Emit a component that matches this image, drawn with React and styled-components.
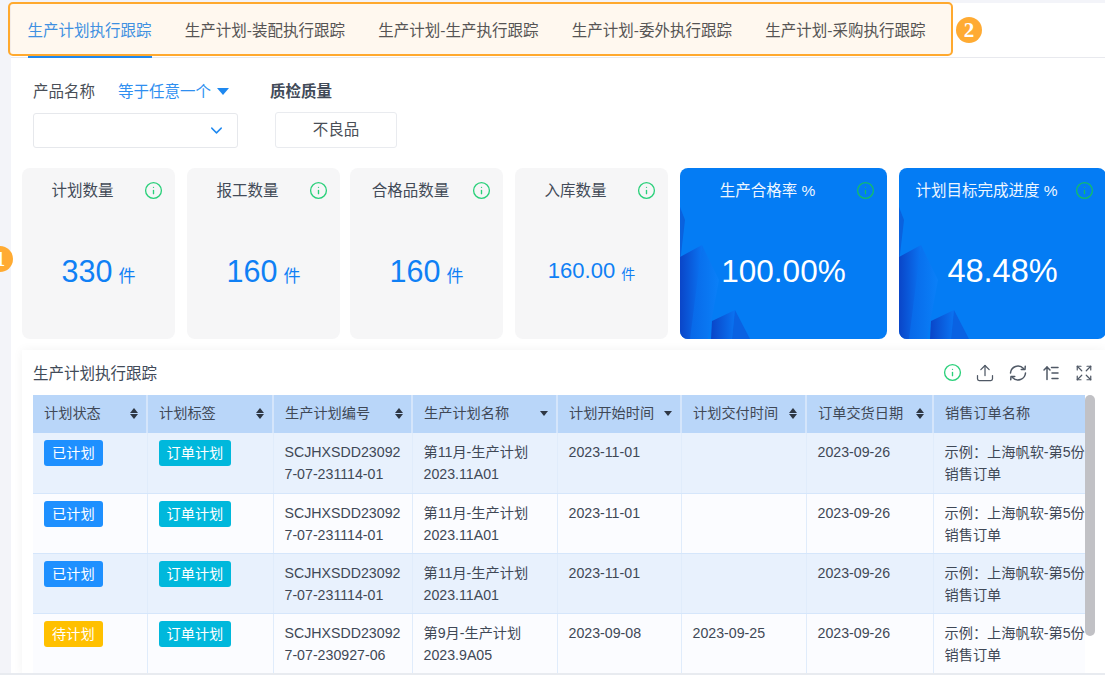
import React from "react";
import styled, { createGlobalStyle } from "styled-components";
import { ChevronDown, Expand, Info, Upload } from "lucide-react";

const GlobalStyle = createGlobalStyle`
  html, body {
    margin: 0;
    padding: 0;
    overflow: hidden;
  }
  body {
    font-family: "Liberation Sans", "Noto Sans CJK SC", sans-serif;
    color: #3f4856;
  }
`;

const Page = styled.div`
  position: relative;
  box-sizing: border-box;
  width: 1105px;
  height: 675px;
  overflow: hidden;
  padding: 3px 0 0 11px;
  background: #f3f4f9;
  border-bottom: 2px solid #e8ebf0;
`;

const Main = styled.main`
  height: 100%;
  background: #fff;
`;

const TabBar = styled.nav`
  display: flex;
  gap: 33.3px;
  height: 55px;
  box-sizing: border-box;
  padding-left: 16.5px;
  border-bottom: 1px solid #e8e9ee;
`;

const Tab = styled.div`
  height: 55px;
  box-sizing: border-box;
  padding-top: 18px;
  font-size: 15.5px;
  line-height: 20px;
  white-space: nowrap;
  color: ${(p) => (p.$active ? "#2f8ff0" : "#484e57")};
  border-bottom: 3px solid ${(p) => (p.$active ? "#1e88f0" : "transparent")};
`;

const TabFrame = styled.div`
  position: absolute;
  left: 8px;
  top: 2px;
  width: 945px;
  height: 54px;
  box-sizing: border-box;
  border: 2.5px solid #ffa92e;
  border-radius: 5px;
  background: rgba(255, 170, 50, 0.08);
  pointer-events: none;
`;

const Badge = styled.div`
  position: absolute;
  left: ${(p) => p.$left}px;
  top: ${(p) => p.$top}px;
  width: 26px;
  height: 26px;
  border-radius: 50%;
  background: #ffab33;
  color: #fff;
  font: bold 21px/26px "Liberation Serif", serif;
  text-align: center;
`;

const Filters = styled.section`
  display: flex;
  padding: 21px 0 20px 22px;
`;

const Field = styled.div`
  display: flex;
  flex-direction: column;
  width: ${(p) => p.$width}px;
  margin-right: 32px;
`;

const FieldLabel = styled.div`
  display: flex;
  align-items: center;
  height: 22px;
  font-size: 15.5px;
  white-space: nowrap;
  font-weight: ${(p) => (p.$strong ? 700 : 400)};
  color: ${(p) => (p.$strong ? "#414a58" : "#4a4f57")};
`;

const Operator = styled.span`
  margin-left: 23px;
  color: #2f8ff0;
`;

const Caret = styled.span`
  width: 0;
  height: 0;
  margin: 2px 0 0 6px;
  border-left: 6px solid transparent;
  border-right: 6px solid transparent;
  border-top: 7px solid #1e88f0;
`;

const Select = styled.div`
  display: flex;
  align-items: center;
  justify-content: flex-end;
  box-sizing: border-box;
  height: 35px;
  margin-top: 12px;
  padding-right: 11px;
  border: 1px solid #e6e8ec;
  border-radius: 3px;
  color: #1e88f0;
`;

const OptionButton = styled.div`
  box-sizing: border-box;
  width: 122px;
  height: 36px;
  margin: 11px 0 0 5px;
  border: 1px solid #e9ebef;
  border-radius: 3px;
  font-size: 15.5px;
  line-height: 34px;
  text-align: center;
  color: #4a4f57;
`;

const Stats = styled.section`
  display: flex;
  height: 171px;
  padding-left: 11px;
`;

const StatCard = styled.div`
  position: relative;
  flex: none;
  display: flex;
  flex-direction: column;
  overflow: hidden;
  width: ${(p) => (p.$blue ? 207 : 153)}px;
  margin-right: ${(p) => (p.$tight ? 10 : 12)}px;
  border-radius: 8px;
  background: ${(p) => (p.$blue ? "#047cf4" : "#f6f6f7")};
  color: ${(p) => (p.$blue ? "#fff" : "#0f80f5")};
`;

const Crystals = styled.svg`
  position: absolute;
  left: 0;
  top: 0;
  width: 100%;
  height: 100%;
`;

const StatHead = styled.div`
  position: relative;
  display: flex;
  align-items: center;
  height: 19px;
  padding: 13px 12px 0 14px;
  line-height: 19px;
`;

const StatTitle = styled.div`
  flex: 1;
  text-align: center;
  font-size: 15.5px;
  white-space: nowrap;
  color: ${(p) => (p.$blue ? "#eef6ff" : "#434b58")};
`;

const InfoMark = styled(Info)`
  flex: none;
  margin-left: 15px;
  color: ${(p) => (p.$blue ? "#12bd6a" : "#2ad07a")};
`;

const StatValue = styled.div`
  position: relative;
  flex: 1;
  display: flex;
  align-items: center;
  justify-content: center;
  gap: 6px;
  padding-top: 3px;
  font-size: ${(p) => p.$size}px;
`;

const Unit = styled.span`
  align-self: center;
  margin-top: ${(p) => (p.$small ? 3 : 6)}px;
  font-size: ${(p) => (p.$small ? 14 : 17)}px;
`;

const Panel = styled.section`
  margin: 11px 0 0 11px;
  padding: 0 10px 0 11px;
  background: #fff;
  box-shadow: 0 0 10px rgba(0, 0, 0, 0.05);
`;

const PanelHead = styled.header`
  display: flex;
  align-items: center;
  height: 45px;
`;

const PanelTitle = styled.h2`
  flex: 1;
  margin: 0 0 2px;
  font-size: 15.5px;
  font-weight: 400;
  color: #414a58;
`;

const Tools = styled.div`
  display: flex;
  align-items: center;
  gap: 13px;
  margin-right: 1px;
  color: #4f5865;
`;

const ToolSlot = styled.span`
  display: flex;
  align-items: center;
  justify-content: center;
  width: 20px;
  height: 20px;
`;

const TableRow = styled.div`
  display: flex;
`;

const TableClip = styled.div`
  flex: none;
  width: 1052px;
  overflow: hidden;
`;

const Table = styled.table`
  width: 1070px;
  table-layout: fixed;
  border-collapse: collapse;
  font-size: 14.2px;
  line-height: 22px;
  color: #3f4856;
`;

const HeadCell = styled.th`
  height: 38px;
  box-sizing: border-box;
  padding: 0 0 0 11px;
  background: #b9d6f9;
  border-right: 2px solid #d4e5fb;
  font-weight: 400;
  text-align: left;
  white-space: nowrap;
`;

const HeadInner = styled.div`
  display: flex;
  align-items: center;
  justify-content: space-between;
  padding: 0 8px 2px 0;
`;

const SortMark = styled.span`
  display: flex;
  flex-direction: column;
  gap: 1px;
  width: 8px;
`;

const Arrow = styled.i`
  width: 0;
  height: 0;
  border-left: 4px solid transparent;
  border-right: 4px solid transparent;
  ${(p) => (p.$up ? "border-bottom" : "border-top")}: 5px solid #2e3744;
`;

const BodyRow = styled.tr`
  height: 60.3px;
  background: ${(p) => (p.$odd ? "#e8f1fd" : "#fbfcff")};
`;

const Cell = styled.td`
  box-sizing: border-box;
  padding: 8px 11px 0;
  vertical-align: top;
  word-break: break-all;
  border-right: 1px solid #e0ecfb;
  border-bottom: 1px solid #d5e6fb;
`;

const Tag = styled.span`
  display: inline-block;
  margin-top: -1px;
  padding: 0 8px;
  border-radius: 3px;
  line-height: 26px;
  vertical-align: top;
  color: #fff;
  background: ${(p) => p.$color};
`;

const Scrollbar = styled.div`
  flex: none;
  width: 10px;
`;

const Thumb = styled.div`
  height: 241px;
  border-radius: 5px;
  background: #c1c1c5;
`;

const columns = [
  { title: "计划状态", width: 114, sort: "both" },
  { title: "计划标签", width: 126, sort: "both" },
  { title: "生产计划编号", width: 139, sort: "both" },
  { title: "生产计划名称", width: 145, sort: "down" },
  { title: "计划开始时间", width: 124, sort: "down" },
  { title: "计划交付时间", width: 125, sort: "both" },
  { title: "订单交货日期", width: 127, sort: "both" },
  { title: "销售订单名称", width: 170, sort: "both" },
];

const rows = [
  { status: "已计划", code: "SCJHXSDD230927-07-231114-01", name: "第11月-生产计划", batch: "2023.11A01", start: "2023-11-01", end: "" },
  { status: "已计划", code: "SCJHXSDD230927-07-231114-01", name: "第11月-生产计划", batch: "2023.11A01", start: "2023-11-01", end: "" },
  { status: "已计划", code: "SCJHXSDD230927-07-231114-01", name: "第11月-生产计划", batch: "2023.11A01", start: "2023-11-01", end: "" },
  { status: "待计划", code: "SCJHXSDD230927-07-230927-06", name: "第9月-生产计划", batch: "2023.9A05", start: "2023-09-08", end: "2023-09-25" },
];

const tabs = [
  "生产计划执行跟踪",
  "生产计划-装配执行跟踪",
  "生产计划-生产执行跟踪",
  "生产计划-委外执行跟踪",
  "生产计划-采购执行跟踪",
];

const stats = [
  { title: "计划数量", value: "330", unit: "件", size: 30.5 },
  { title: "报工数量", value: "160", unit: "件", size: 30.5 },
  { title: "合格品数量", value: "160", unit: "件", size: 30.5 },
  { title: "入库数量", value: "160.00", unit: "件", size: 22, small: true },
  { title: "生产合格率 %", value: "100.00%", size: 31.5, blue: true },
  { title: "计划目标完成进度 %", value: "48.48%", size: 32.5, blue: true },
];

function CrystalArt({ id }) {
  return (
    <Crystals viewBox="0 0 207 171" preserveAspectRatio="none">
      <defs>
        <linearGradient id={`${id}a`} x1="0" y1="0" x2="1" y2="0">
          <stop offset="0" stopColor="#0a45c8" />
          <stop offset="1" stopColor="#0a74f2" />
        </linearGradient>
        <linearGradient id={`${id}b`} x1="0" y1="0" x2="1" y2="0">
          <stop offset="0" stopColor="#0868e8" />
          <stop offset="1" stopColor="#0a80f8" />
        </linearGradient>
      </defs>
      <polygon points="0,39 5,52 0,95" fill="#0a62de" />
      <polygon points="0,89 22,77 12,171 0,171" fill={`url(#${id}a)`} />
      <polygon points="22,77 39,112 28,171 10,171" fill={`url(#${id}b)`} />
      <polygon points="32,153 55,142 52,171 31,171" fill={`url(#${id}a)`} />
      <polygon points="55,142 70,171 52,171" fill="#0a62e2" />
    </Crystals>
  );
}

function RefreshIcon() {
  return (
    <svg width="20" height="20" viewBox="0 0 16 16" fill="none" stroke="currentColor" strokeWidth="1.2" strokeLinecap="round" strokeLinejoin="round">
      <path d="M2 8a6 6 0 0 1 10.4-3.6" />
      <path d="M14 8a6 6 0 0 1-10.4 3.6" />
      <path d="M10.6 5.2h3l.2-2.6" />
      <path d="M5.4 10.8h-3l-.2 2.6" />
    </svg>
  );
}

function SortLinesIcon() {
  return (
    <svg width="20" height="20" viewBox="0 0 20 20" fill="none" stroke="currentColor" strokeWidth="1.5" strokeLinecap="round" strokeLinejoin="round">
      <path d="M6 16.5V4" />
      <path d="M3 7l3-3 3 3" />
      <path d="M10.5 4.5H17" />
      <path d="M11 10h6" />
      <path d="M11 15.5h6" />
    </svg>
  );
}

export default function App() {
  return (
    <Page>
      <GlobalStyle />
      <Main>
        <TabBar>
          {tabs.map((tab, i) => (
            <Tab key={tab} $active={i === 0}>
              {tab}
            </Tab>
          ))}
        </TabBar>

        <Filters>
          <Field $width={205}>
            <FieldLabel>
              产品名称
              <Operator>等于任意一个</Operator>
              <Caret />
            </FieldLabel>
            <Select>
              <ChevronDown size={19} strokeWidth={1.8} />
            </Select>
          </Field>
          <Field $width={127}>
            <FieldLabel $strong>质检质量</FieldLabel>
            <OptionButton>不良品</OptionButton>
          </Field>
        </Filters>

        <Stats>
          {stats.map((stat, i) => (
            <StatCard key={stat.title} $blue={stat.blue} $tight={i === 1}>
              {stat.blue && <CrystalArt id={`crystal${i}`} />}
              <StatHead>
                <StatTitle $blue={stat.blue}>{stat.title}</StatTitle>
                <InfoMark size={19} strokeWidth={1.7} $blue={stat.blue} />
              </StatHead>
              <StatValue $size={stat.size}>
                {stat.value}
                {stat.unit && <Unit $small={stat.small}>{stat.unit}</Unit>}
              </StatValue>
            </StatCard>
          ))}
        </Stats>

        <Panel>
          <PanelHead>
            <PanelTitle>生产计划执行跟踪</PanelTitle>
            <Tools>
              <ToolSlot>
                <Info size={19} strokeWidth={1.7} color="#2ad07a" />
              </ToolSlot>
              <ToolSlot>
                <Upload size={20} strokeWidth={1.5} />
              </ToolSlot>
              <ToolSlot>
                <RefreshIcon />
              </ToolSlot>
              <ToolSlot>
                <SortLinesIcon />
              </ToolSlot>
              <ToolSlot>
                <Expand size={18} strokeWidth={1.6} />
              </ToolSlot>
            </Tools>
          </PanelHead>
          <TableRow>
            <TableClip>
              <Table>
                <colgroup>
                  {columns.map((col) => (
                    <col key={col.title} width={col.width} />
                  ))}
                </colgroup>
                <thead>
                  <tr>
                    {columns.map((col) => (
                      <HeadCell key={col.title}>
                        <HeadInner>
                          {col.title}
                          <SortMark>
                            {col.sort === "both" && <Arrow $up />}
                            <Arrow />
                          </SortMark>
                        </HeadInner>
                      </HeadCell>
                    ))}
                  </tr>
                </thead>
                <tbody>
                  {rows.map((row, i) => (
                    <BodyRow key={i} $odd={i % 2 === 0}>
                      <Cell>
                        <Tag $color={row.status === "已计划" ? "#1e90ff" : "#ffc000"}>{row.status}</Tag>
                      </Cell>
                      <Cell>
                        <Tag $color="#00b8dc">订单计划</Tag>
                      </Cell>
                      <Cell>{row.code}</Cell>
                      <Cell>
                        {row.name}
                        <br />
                        {row.batch}
                      </Cell>
                      <Cell>{row.start}</Cell>
                      <Cell>{row.end}</Cell>
                      <Cell>2023-09-26</Cell>
                      <Cell>示例：上海帆软-第5份销售订单</Cell>
                    </BodyRow>
                  ))}
                </tbody>
              </Table>
            </TableClip>
            <Scrollbar>
              <Thumb />
            </Scrollbar>
          </TableRow>
        </Panel>
      </Main>
      <TabFrame />
      <Badge $left={956} $top={17}>2</Badge>
      <Badge $left={-13} $top={246}>1</Badge>
    </Page>
  );
}
